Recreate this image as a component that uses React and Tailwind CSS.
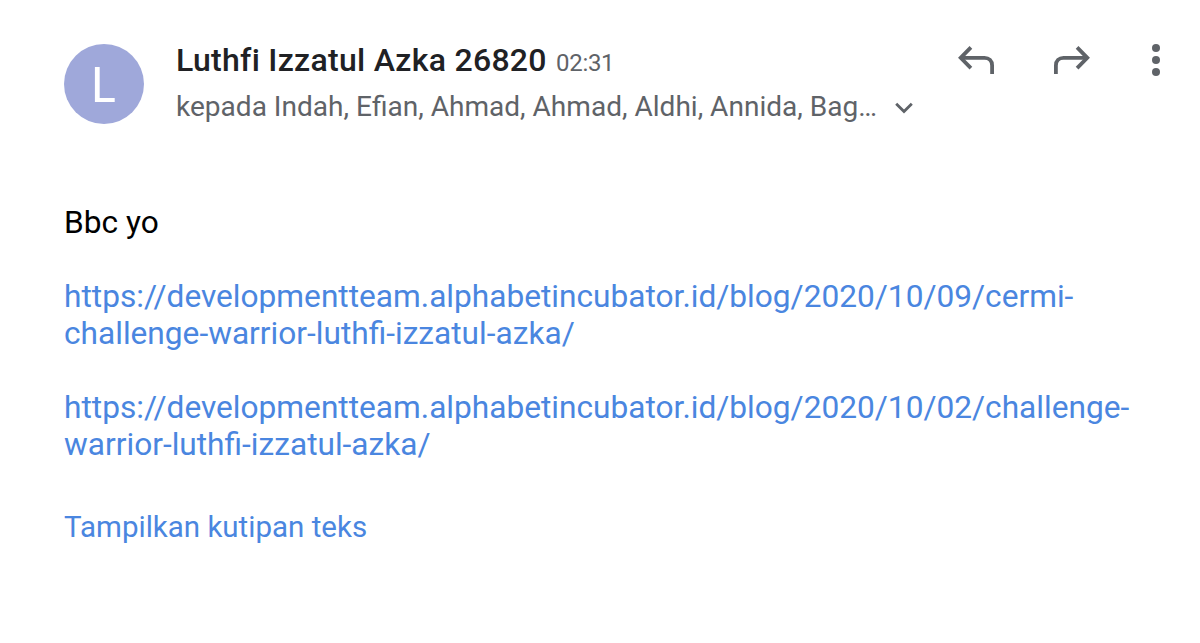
import clsx from "clsx";

const links = [
  [
    "https://developmentteam.alphabetincubator.id/blog/2020/10/09/cermi-",
    "challenge-warrior-luthfi-izzatul-azka/",
  ],
  [
    "https://developmentteam.alphabetincubator.id/blog/2020/10/02/challenge-",
    "warrior-luthfi-izzatul-azka/",
  ],
];

function ReplyIcon({ className }) {
  return (
    <svg
      viewBox="0 0 36 28"
      fill="none"
      stroke="currentColor"
      strokeWidth="3.8"
      className={clsx("h-7 w-9", className)}
    >
      <path d="M12.9 1.4 2.7 11.8l10.2 10.4" />
      <path d="M3 11.8h23.5c4.5 0 7.6 3.1 7.6 7.6V28" />
    </svg>
  );
}

export default function App() {
  return (
    <div className="h-[643px] w-[1200px] overflow-hidden bg-white font-['Roboto',sans-serif]">
      {/* Header */}
      <header className="flex items-start pt-11 pl-16">
        <div className="flex h-20 w-20 items-center justify-center rounded-full bg-[#9fa8da] pr-0.5 pb-0.5 font-['Lato',sans-serif] text-[48.5px] text-white">
          L
        </div>
        <div className="ml-8 w-[782px]">
          <div className="flex h-8 items-baseline whitespace-nowrap">
            <h1 className="w-[370px] text-[32px] font-medium leading-8 tracking-[0.28px] text-[#202124]">
              Luthfi Izzatul Azka 26820
            </h1>
            <span className="ml-2.5 text-[24px] leading-8 tracking-[-0.3px] text-[#5f6368]">
              02:31
            </span>
          </div>
          <div className="mt-[15px] flex h-8 items-center whitespace-nowrap text-[28.05px] text-[#5f6368]">
            <span>kepada Indah, Efian, Ahmad, Ahmad, Aldhi, Annida, Bag…</span>
            <svg
              viewBox="0 0 18 12"
              fill="none"
              stroke="currentColor"
              strokeWidth="2.8"
              className="mt-0.5 ml-[18px] h-3 w-[18px]"
            >
              <path d="m1.2 1.8 7.8 7.8 7.8-7.8" />
            </svg>
          </div>
        </div>
        <div className="flex items-start text-[#5f6368]">
          <ReplyIcon className="mt-0.5" />
          <ReplyIcon className="mt-0.5 ml-[60px] -scale-x-100" />
          <svg
            viewBox="0 0 8 32"
            fill="currentColor"
            className="ml-[62px] h-8 w-2"
          >
            <circle cx="4" cy="4" r="4" />
            <circle cx="4" cy="16" r="4" />
            <circle cx="4" cy="28" r="4" />
          </svg>
        </div>
      </header>

      {/* Body */}
      <main className="pt-20 pl-16 text-[31.65px] leading-[37px] whitespace-nowrap text-[#4a86e0]">
        <p className="text-black">Bbc yo</p>
        {links.map((lines) => (
          <a key={lines[0]} href="#" className="mt-[37px] block">
            {lines.map((line) => (
              <span key={line} className="block">
                {line}
              </span>
            ))}
          </a>
        ))}
        <button className="mt-[46px] block text-[29.5px]">
          Tampilkan kutipan teks
        </button>
      </main>
    </div>
  );
}
